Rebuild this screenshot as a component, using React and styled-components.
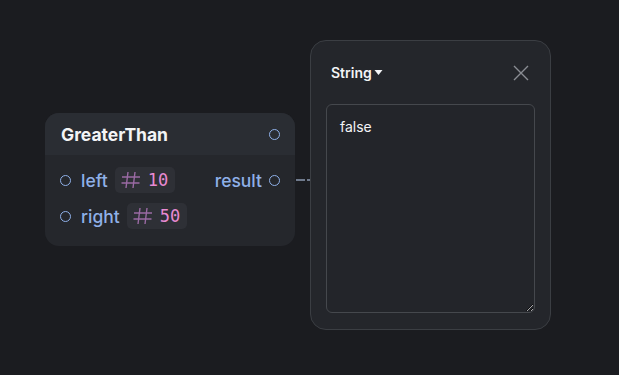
import React from 'react';
import styled, { createGlobalStyle } from 'styled-components';

const Global = createGlobalStyle`
  html, body {
    margin: 0;
    padding: 0;
    background: #1b1c20;
    font-family: Inter, "Noto Sans", sans-serif;
  }
`;

const Canvas = styled.div`
  position: relative;
  width: 619px;
  height: 375px;
  background: #1b1c20;
  overflow: hidden;
`;

const Node = styled.div`
  position: absolute;
  left: 45px;
  top: 113px;
  width: 250px;
  height: 133px;
  border-radius: 14px;
  background: #25272c;
  overflow: hidden;
  display: flex;
  flex-direction: column;
`;

const NodeHeader = styled.div`
  height: 42px;
  background: #2a2d33;
  display: flex;
  align-items: center;
  justify-content: space-between;
  padding: 0 15px 0 16px;
  color: #f3f4f6;
  font-size: 17.5px;
  font-weight: 700;
`;

const Body = styled.div`
  display: flex;
  flex-direction: column;
  gap: 10px;
  padding: 12px 15px 0 15px;
`;

const Row = styled.div`
  display: flex;
  align-items: center;
  height: 26px;
  gap: 7px;
`;

const Port = styled.span`
  width: 9px;
  height: 9px;
  border: 1.5px solid #8fb0e8;
  border-radius: 50%;
  flex: none;
`;

const Label = styled.span`
  color: #8fb0e8;
  font-size: 17.5px;
  font-weight: 500;
  margin-left: ${p => p.$left ? '3px' : '0'};
`;

const Badge = styled.span`
  display: inline-flex;
  align-items: center;
  gap: 6px;
  height: 26px;
  padding: 0 7px 0 5px;
  background: #2e3036;
  border-radius: 5px;
  font-family: "DejaVu Sans Mono", monospace;
`;

const Num = styled.span`
  color: #e88ad2;
  font-size: 17px;
`;

const Spacer = styled.div`
  flex: 1;
`;

const Edge = styled.div`
  position: absolute;
  left: 296px;
  top: 179px;
  width: 14px;
  height: 2px;
  background: linear-gradient(to right, #6f7a8c 0 9px, transparent 9px 11px, #6f7a8c 11px 14px);
`;

const Popup = styled.div`
  position: absolute;
  left: 310px;
  top: 40px;
  width: 241px;
  height: 290px;
  box-sizing: border-box;
  border: 1px solid #3b3e43;
  border-radius: 16px;
  background: #24262b;
  display: flex;
  flex-direction: column;
  padding: 0 15px 16px 15px;
`;

const PopupHeader = styled.div`
  height: 63px;
  display: flex;
  align-items: center;
  justify-content: space-between;
  padding: 0 4px 0 5px;
`;

const TypeSelect = styled.span`
  color: #f3f4f6;
  font-size: 14px;
  font-weight: 600;
  display: inline-flex;
  align-items: center;
  gap: 2px;
`;

const CloseBtn = styled.span`
  display: flex;
  width: 20px;
  height: 20px;
  align-items: center;
  justify-content: center;
`;

const TextArea = styled.textarea`
  flex: 1;
  resize: both;
  box-sizing: border-box;
  background: #23252a;
  border: 1px solid #45484d;
  border-radius: 6px;
  color: #f3f4f6;
  font-family: Inter, "Noto Sans", sans-serif;
  font-size: 14px;
  padding: 13px 13px;
  outline: none;
  color-scheme: dark;
`;

const Hash = () => (
  <svg width="22" height="20" viewBox="0 0 22 20" fill="none" stroke="#9a6aa4" strokeWidth="1.4">
    <path d="M8 2 L6 18 M15 2 L13 18 M2 7 L20 7 M1.5 13 L19.5 13" />
  </svg>
);

export default function App() {
  return (
    <Canvas>
      <Global />
      <Node>
        <NodeHeader>
          GreaterThan
          <Port />
        </NodeHeader>
        <Body>
          <Row>
            <Port />
            <Label $left>left</Label>
            <Badge><Hash /><Num>10</Num></Badge>
            <Spacer />
            <Label>result</Label>
            <Port />
          </Row>
          <Row>
            <Port />
            <Label $left>right</Label>
            <Badge><Hash /><Num>50</Num></Badge>
          </Row>
        </Body>
      </Node>
      <Edge />
      <Popup>
        <PopupHeader>
          <TypeSelect>
            String
            <svg width="9" height="7" viewBox="0 0 9 7"><path d="M0.5 1 L8.5 1 L4.5 6 Z" fill="#f3f4f6" /></svg>
          </TypeSelect>
          <CloseBtn>
            <svg width="16" height="16" viewBox="0 0 16 16" stroke="#8a8d93" strokeWidth="1.4">
              <path d="M1 1 L15 15 M15 1 L1 15" />
            </svg>
          </CloseBtn>
        </PopupHeader>
        <TextArea defaultValue="false" />
      </Popup>
    </Canvas>
  );
}
